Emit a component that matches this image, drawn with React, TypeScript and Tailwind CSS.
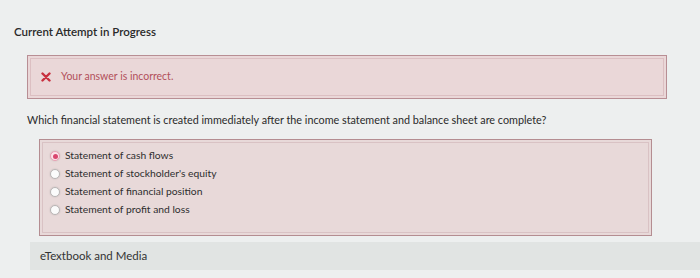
import React from "react";

const options = [
  "Statement of cash flows",
  "Statement of stockholder's equity",
  "Statement of financial position",
  "Statement of profit and loss",
];

function Radio({ checked }: { checked?: boolean }) {
  return (
    <span
      className={
        "flex h-[10px] w-[10px] items-center justify-center rounded-full border shadow-[0_0_2px_rgba(0,0,0,0.15)] " +
        (checked ? "border-[#e8a2b4] bg-[#fbe3ea]" : "border-[#b9b6b6] bg-[#fbfbfb]")
      }
    >
      {checked && <span className="h-[5px] w-[5px] rounded-full bg-[#d9476f]" />}
    </span>
  );
}

export default function App() {
  return (
    <div
      className="flex h-[278px] w-[700px] flex-col overflow-hidden bg-[#edefef] text-[#333]"
      style={{ fontFamily: "Lato, 'Open Sans', sans-serif" }}
    >
      {/* Header */}
      <div className="pl-[14px] pt-[24px] text-[11.5px] font-semibold leading-[16px] text-[#2a2a2a]">
        Current Attempt in Progress
      </div>

      {/* Result banner */}
      <div className="ml-[27px] mt-[15px] h-[44px] w-[640px] border border-[#b88e94] bg-[#ead7d8] p-[2px]">
        <div className="flex h-full items-center border border-[#dcbfc2] pl-[10px]">
          <svg width="10" height="10" viewBox="0 0 10 10" className="mr-[10px]">
            <path d="M1.5 1.5 L8.5 8.5 M8.5 1.5 L1.5 8.5" stroke="#c8303f" strokeWidth="2.4" strokeLinecap="round" />
          </svg>
          <span className="text-[10.5px] text-[#b2505b]">Your answer is incorrect.</span>
        </div>
      </div>

      {/* Question */}
      <div className="ml-[27px] mt-[14px] text-[10.8px] leading-[14px] text-[#2a2a2a]">
        Which financial statement is created immediately after the income statement and balance sheet are complete?
      </div>

      {/* Choices */}
      <div className="ml-[39px] mt-[12px] h-[97px] w-[613px] border border-[#b48d91] bg-[#e8d9d9] p-[2px]">
        <div className="flex h-full flex-col border border-[#d9c2c4] pl-[7px] pt-[4px]">
          {options.map((o, i) => (
            <div key={o} className="flex h-[18px] items-center gap-[5px]">
              <Radio checked={i === 0} />
              <span className="text-[10.3px] text-[#2e2e2e]">{o}</span>
            </div>
          ))}
        </div>
      </div>

      {/* eTextbook */}
      <div className="ml-[30px] mt-[6px] flex h-[28px] items-center bg-[#e1e4e3] pl-[10px] text-[11.5px] text-[#333]">
        eTextbook and Media
      </div>
    </div>
  );
}
